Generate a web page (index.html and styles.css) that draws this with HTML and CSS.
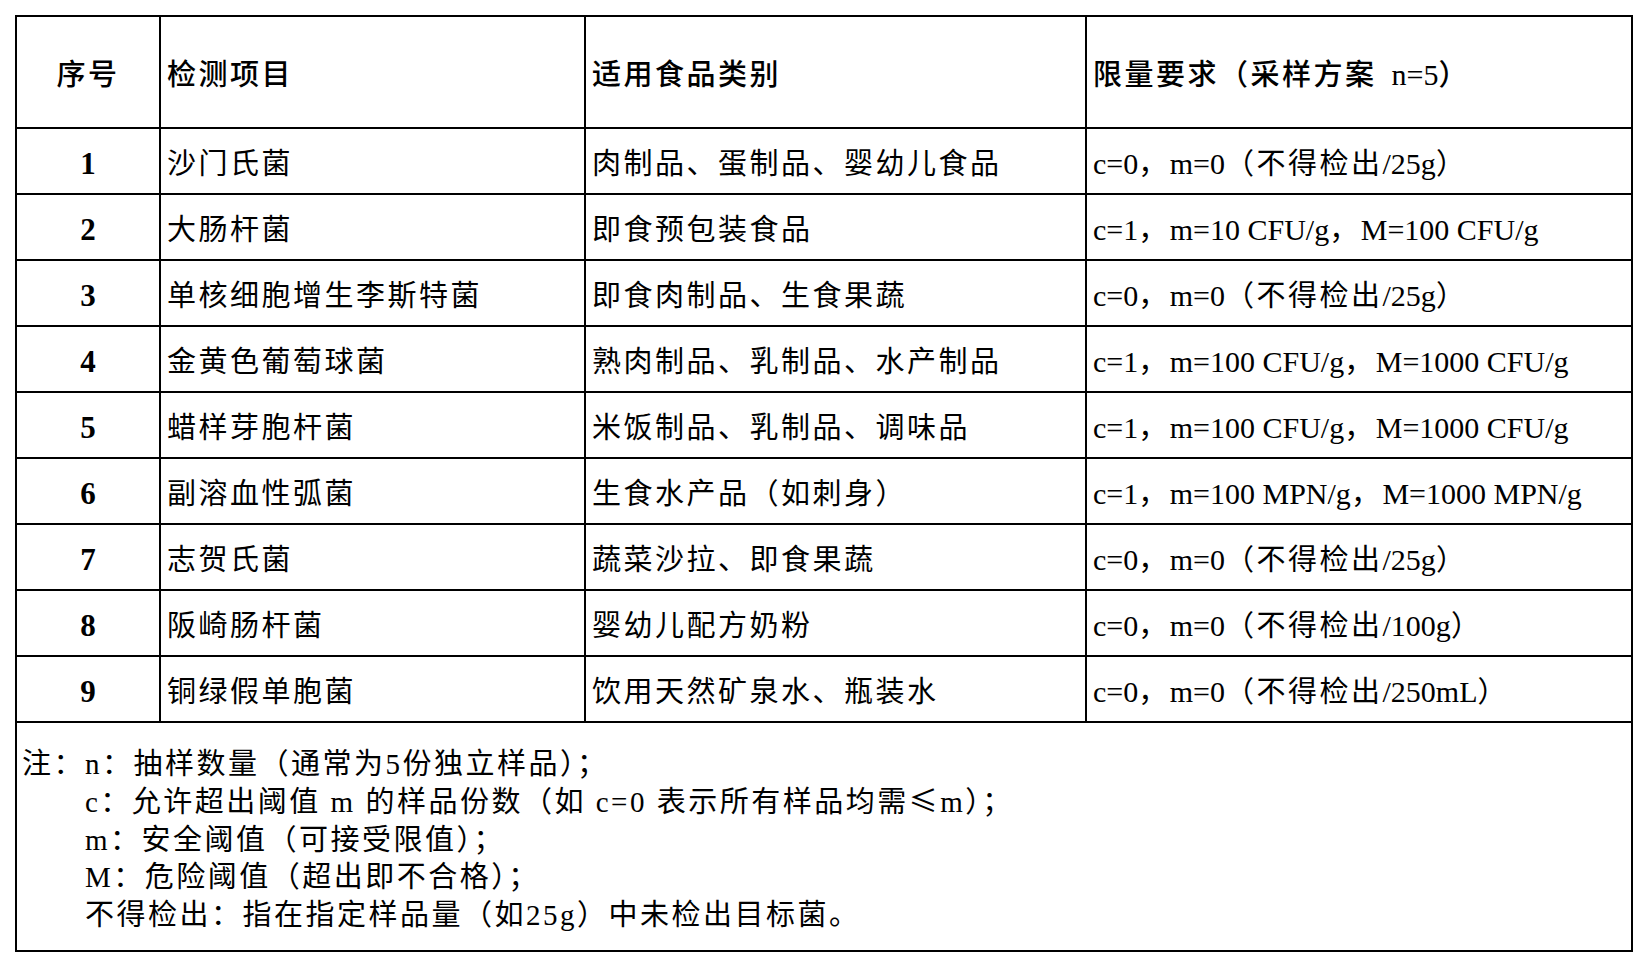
FILE: index.html
```html
<!DOCTYPE html>
<html lang="zh-CN">
<head>
<meta charset="utf-8">
<title>微生物限量要求</title>
<link rel="stylesheet" href="styles.css">
</head>
<body>
<div class="sheet">
  <div class="grid">
    <div class="cell head center">序号</div>
    <div class="cell head">检测项目</div>
    <div class="cell head">适用食品类别</div>
    <div class="cell head">限量要求（采样方案<span class="lat gap">n=5</span>）</div>

    <div class="cell num">1</div>
    <div class="cell">沙门氏菌</div>
    <div class="cell">肉制品、蛋制品、婴幼儿食品</div>
    <div class="cell"><span class="lat">c=0</span>，<span class="lat">m=0</span>（不得检出<span class="lat">/25g</span>）</div>

    <div class="cell num">2</div>
    <div class="cell">大肠杆菌</div>
    <div class="cell">即食预包装食品</div>
    <div class="cell"><span class="lat">c=1</span>，<span class="lat">m=10 CFU/g</span>，<span class="lat">M=100 CFU/g</span></div>

    <div class="cell num">3</div>
    <div class="cell">单核细胞增生李斯特菌</div>
    <div class="cell">即食肉制品、生食果蔬</div>
    <div class="cell"><span class="lat">c=0</span>，<span class="lat">m=0</span>（不得检出<span class="lat">/25g</span>）</div>

    <div class="cell num">4</div>
    <div class="cell">金黄色葡萄球菌</div>
    <div class="cell">熟肉制品、乳制品、水产制品</div>
    <div class="cell"><span class="lat">c=1</span>，<span class="lat">m=100 CFU/g</span>，<span class="lat">M=1000 CFU/g</span></div>

    <div class="cell num">5</div>
    <div class="cell">蜡样芽胞杆菌</div>
    <div class="cell">米饭制品、乳制品、调味品</div>
    <div class="cell"><span class="lat">c=1</span>，<span class="lat">m=100 CFU/g</span>，<span class="lat">M=1000 CFU/g</span></div>

    <div class="cell num">6</div>
    <div class="cell">副溶血性弧菌</div>
    <div class="cell">生食水产品（如刺身）</div>
    <div class="cell"><span class="lat">c=1</span>，<span class="lat">m=100 MPN/g</span>，<span class="lat">M=1000 MPN/g</span></div>

    <div class="cell num">7</div>
    <div class="cell">志贺氏菌</div>
    <div class="cell">蔬菜沙拉、即食果蔬</div>
    <div class="cell"><span class="lat">c=0</span>，<span class="lat">m=0</span>（不得检出<span class="lat">/25g</span>）</div>

    <div class="cell num">8</div>
    <div class="cell">阪崎肠杆菌</div>
    <div class="cell">婴幼儿配方奶粉</div>
    <div class="cell"><span class="lat">c=0</span>，<span class="lat">m=0</span>（不得检出<span class="lat">/100g</span>）</div>

    <div class="cell num">9</div>
    <div class="cell">铜绿假单胞菌</div>
    <div class="cell">饮用天然矿泉水、瓶装水</div>
    <div class="cell"><span class="lat">c=0</span>，<span class="lat">m=0</span>（不得检出<span class="lat">/250mL</span>）</div>

    <div class="cell notes">
      <div class="note-line">注：n：抽样数量（通常为5份独立样品）；</div>
      <div class="note-line indent">c：允许超出阈值 m 的样品份数（如 c=0 表示所有样品均需<span class="cjk">≤</span>m）；</div>
      <div class="note-line indent">m：安全阈值（可接受限值）；</div>
      <div class="note-line indent">M：危险阈值（超出即不合格）；</div>
      <div class="note-line indent">不得检出：指在指定样品量（如25g）中未检出目标菌。</div>
    </div>
  </div>
</div>
</body>
</html>
```

FILE: styles.css
```css
html, body {
  margin: 0;
  padding: 0;
  background: #ffffff;
}

body {
  font-family: "Liberation Serif", "Noto Sans CJK SC", serif;
  font-size: 29px;
  letter-spacing: 2.5px;
  color: #000000;
}

.sheet {
  padding: 15px 0 0 15px;
}

.grid {
  display: grid;
  grid-template-columns: 144px 425px 501px 546px;
  grid-template-rows: 112px repeat(9, 66px) 229px;
  width: 1618px;
  box-sizing: border-box;
  border-top: 2px solid #000;
  border-left: 2px solid #000;
}

.cell {
  box-sizing: border-box;
  border-right: 2px solid #000;
  border-bottom: 2px solid #000;
  display: flex;
  align-items: center;
  padding: 6px 0 0 6px;
  white-space: nowrap;
  line-height: 1.2;
}

.head {
  font-weight: 500;
}

.center {
  justify-content: center;
  padding-left: 0;
}

.num {
  justify-content: center;
  padding-left: 0;
  font-weight: 700;
  font-size: 31px;
  letter-spacing: 0;
}

.lat {
  letter-spacing: 0;
  font-size: 30px;
}

.gap {
  margin-left: 15px;
}

.cjk {
  font-family: "Noto Sans CJK SC", sans-serif;
  line-height: 0;
}

.notes {
  grid-column: 1 / -1;
  flex-direction: column;
  align-items: flex-start;
  justify-content: flex-start;
  padding: 23px 0 0 5px;
}

.note-line {
  line-height: 37.8px;
  height: 37.8px;
}

.indent {
  padding-left: 63px;
}
```
